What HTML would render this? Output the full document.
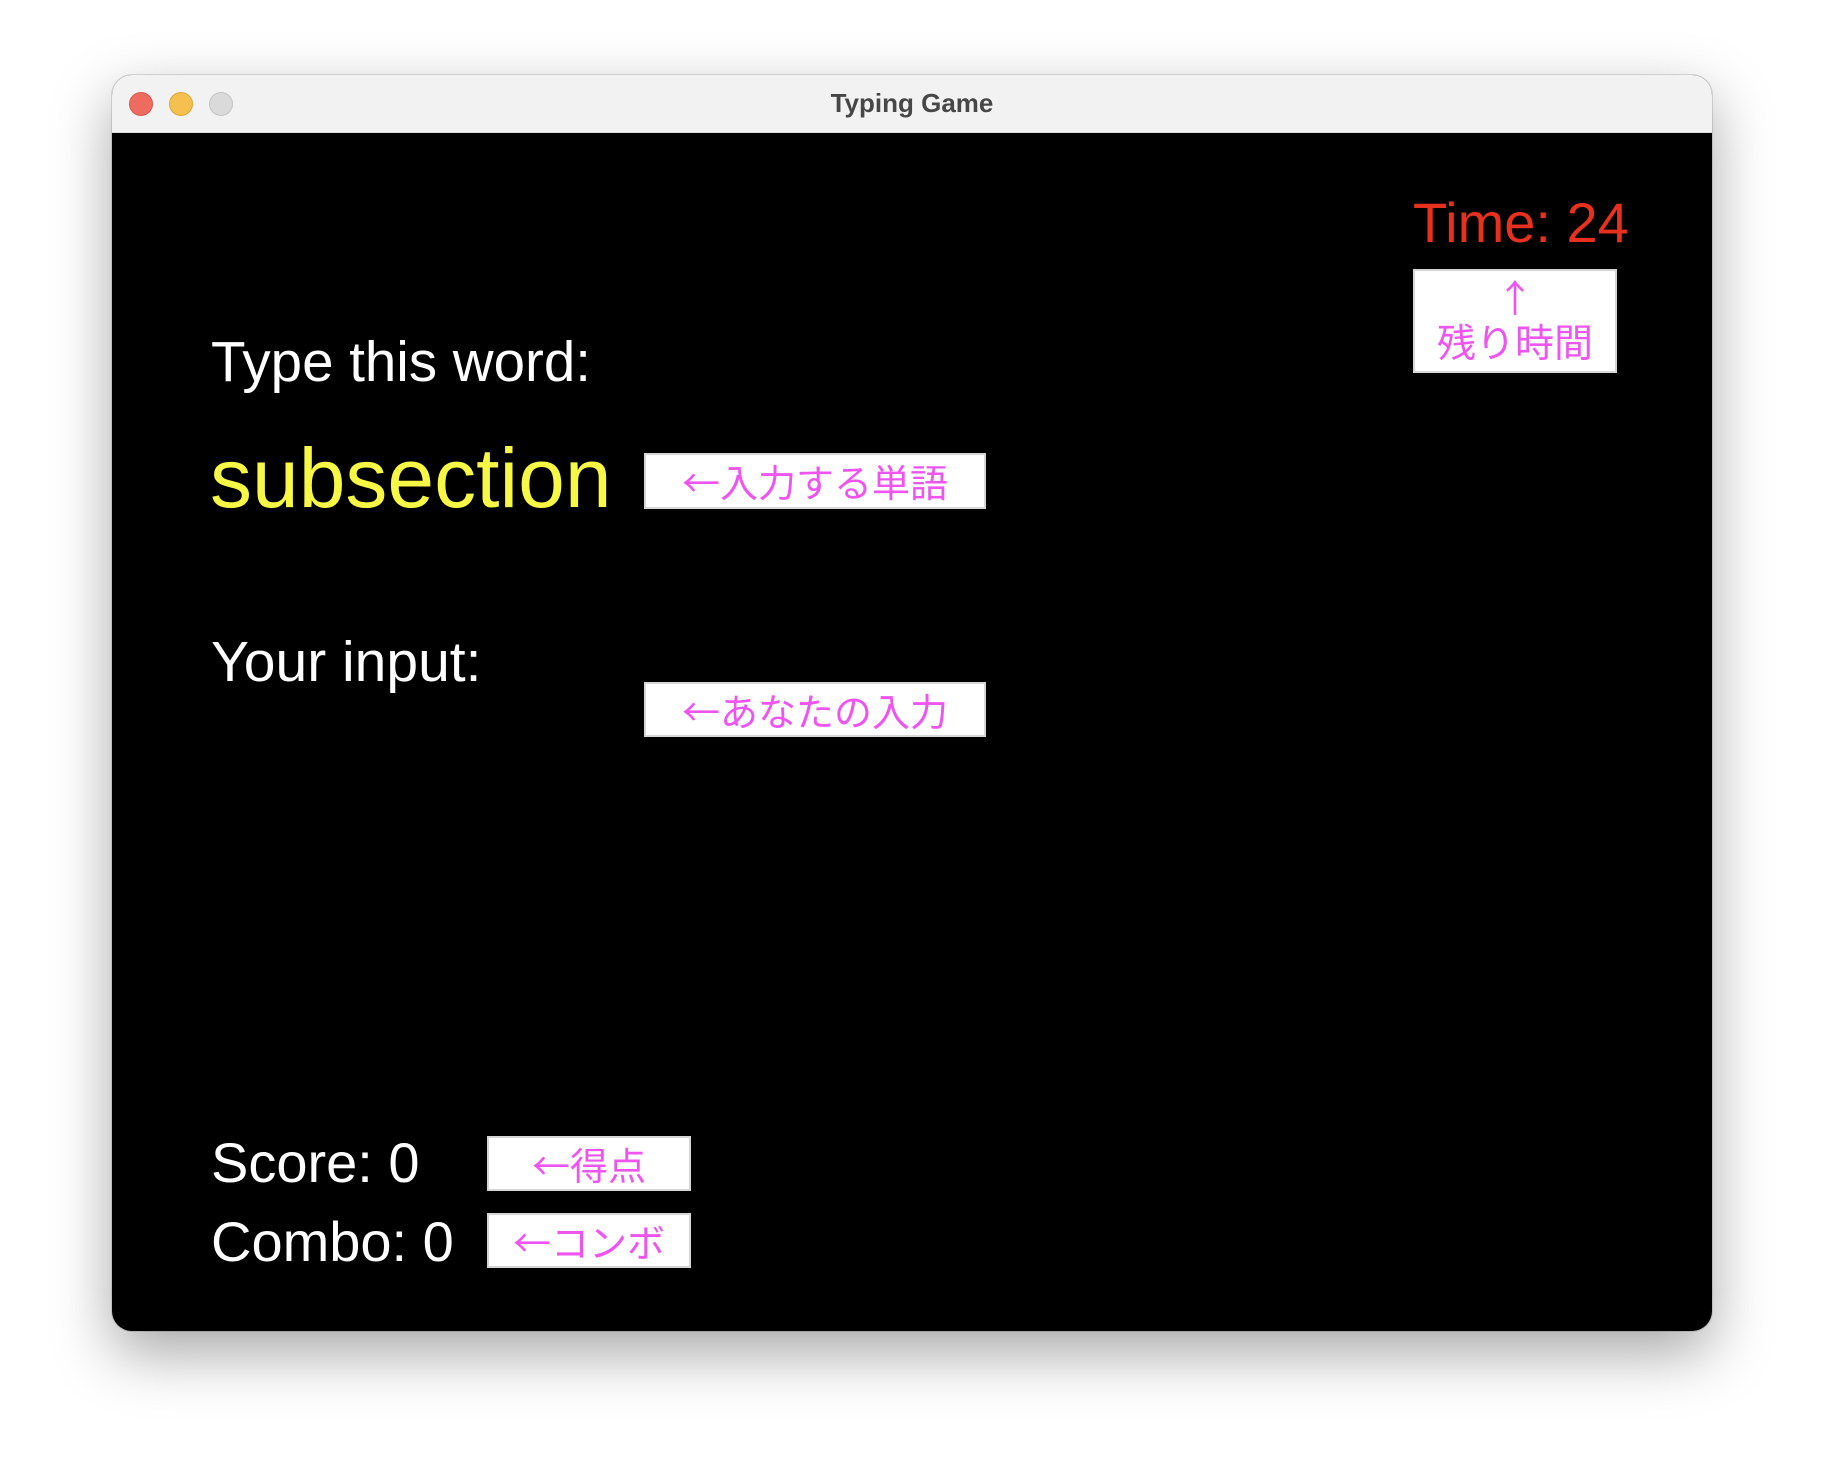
<!DOCTYPE html>
<html><head><meta charset="utf-8"><style>
html,body{margin:0;padding:0;}
body{width:1824px;height:1480px;background:#fff;position:relative;overflow:hidden;font-family:"Liberation Sans","Noto Sans CJK JP",sans-serif;}
.win{position:absolute;left:112px;top:75px;width:1600px;height:1256px;border-radius:20px;background:#000;overflow:hidden;box-shadow:0 22px 60px rgba(0,0,0,0.35),0 0 0 1px rgba(0,0,0,0.12);}
.tb{position:absolute;left:0;top:0;width:100%;height:57px;background:#f1f2f1;border-bottom:1px solid #dcdcdc;}
.dot{position:absolute;top:17px;width:22px;height:22px;border-radius:50%;}
.title{position:absolute;left:0;width:100%;top:13px;text-align:center;font-weight:bold;font-size:26px;color:#474747;line-height:30px;}
.t{position:absolute;white-space:nowrap;line-height:1;}
.box{position:absolute;background:#fff;border:2px solid #d6d6d6;box-sizing:border-box;color:#ee55f0;font-family:"Noto Sans CJK JP",sans-serif;font-size:38px;display:flex;align-items:center;justify-content:center;line-height:1;}
</style></head><body>
<div class="win">
  <div class="tb">
    <div class="dot" style="left:17px;background:#ee6b60;border:1px solid #d55a50;"></div>
    <div class="dot" style="left:57px;background:#f5c04f;border:1px solid #d9a63c;"></div>
    <div class="dot" style="left:97px;background:#d9dad9;border:1px solid #c4c4c4;"></div>
    <div class="title">Typing Game</div>
  </div>
</div>
<div class="t" style="left:1413px;top:195px;font-size:56px;color:#e8301f;">Time: 24</div>
<div class="box" style="left:1413px;top:269px;width:204px;height:104px;flex-direction:column;"><span style="font-size:38px;line-height:40px;">↑</span><span style="font-size:39px;line-height:50px;">残り時間</span></div>
<div class="t" style="left:211px;top:334px;font-size:56.5px;color:#fff;">Type this word:</div>
<div class="t" style="left:210px;top:436px;font-size:84px;color:#f7f746;">subsection</div>
<div class="box" style="left:644px;top:453px;width:342px;height:56px;">←入力する単語</div>
<div class="t" style="left:211px;top:634px;font-size:57px;color:#fff;">Your input:</div>
<div class="box" style="left:644px;top:682px;width:342px;height:55px;">←あなたの入力</div>
<div class="t" style="left:211px;top:1135px;font-size:56px;color:#fff;">Score: 0</div>
<div class="box" style="left:487px;top:1136px;width:204px;height:55px;">←得点</div>
<div class="t" style="left:211px;top:1214px;font-size:56px;color:#fff;">Combo: 0</div>
<div class="box" style="left:487px;top:1213px;width:204px;height:55px;">←コンボ</div>
</body></html>
